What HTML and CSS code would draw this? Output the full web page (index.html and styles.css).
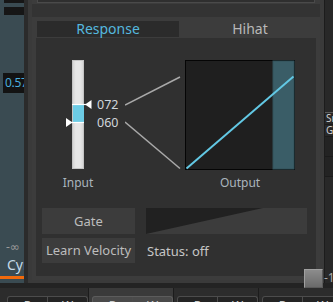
FILE: index.html
```html
<!DOCTYPE html>
<html lang="en">
<head>
    <meta charset="UTF-8">
    <title>Velocity Response</title>
    <link rel="stylesheet" href="styles.css">
</head>
<body>
<div class="app">

    <!-- Track strip on the left, mostly hidden behind the window -->
    <div class="track-strip">
        <div class="strip-cap"></div>
        <div class="strip-cap tall"></div>
        <div class="readout">0.57</div>
        <div class="db">-&infin;</div>
        <div class="track-name">Cymbal</div>
        <div class="track-bar"></div>
    </div>

    <!-- Trigger window -->
    <div class="window">
        <div class="window-body">
            <div class="prev-panel"><div class="prev-box"></div></div>

            <div class="panel">
                <div class="tabs">
                    <div class="tab active">Response</div>
                    <div class="tab">Hihat</div>
                </div>

                <div class="content">
                    <div class="graph-row">
                        <div class="col in-col">
                            <svg class="slider" width="36" height="110" viewBox="0 0 36 110">
                                <defs>
                                    <linearGradient id="slider-fill" x1="0" y1="0" x2="1" y2="0">
                                        <stop offset="0" stop-color="#d2d2d2"/>
                                        <stop offset="0.3" stop-color="#e6e6e6"/>
                                        <stop offset="0.7" stop-color="#e6e6e6"/>
                                        <stop offset="1" stop-color="#d4d4d4"/>
                                    </linearGradient>
                                </defs>
                                <rect x="12.5" y="0.5" width="11" height="108" fill="url(#slider-fill)" stroke="#c4c4c4"/>
                                <rect x="13" y="44" width="11" height="18" fill="#6ccbe4"/>
                                <line x1="12" y1="44.5" x2="26" y2="44.5" stroke="#fff" stroke-width="1.2"/>
                                <polygon points="25,44.5 31.5,40 31.5,49" fill="#fff"/>
                                <line x1="6" y1="62.5" x2="24" y2="62.5" stroke="#fff" stroke-width="1.2"/>
                                <polygon points="6,58 6,67 12.5,62.5" fill="#fff"/>
                            </svg>
                            <div class="axis-label">Input</div>
                        </div>

                        <div class="readouts">
                            <span>072</span>
                            <span>060</span>
                        </div>

                        <svg class="links" width="60" height="110" viewBox="0 0 60 110">
                            <line x1="0" y1="45" x2="55" y2="17" stroke="#a9a9a9" stroke-width="1.5"/>
                            <line x1="0" y1="62" x2="55" y2="108.5" stroke="#a9a9a9" stroke-width="1.5"/>
                        </svg>

                        <div class="col out-col">
                            <svg class="curve" width="110" height="110" viewBox="0 0 110 110">
                                <rect x="0.5" y="0.5" width="109" height="109" fill="#1f1f1f" stroke="#050505"/>
                                <rect x="88" y="1" width="21" height="108" fill="#3a5d67" stroke="#33525b"/>
                                <line x1="1.5" y1="108.5" x2="108.5" y2="16.5" stroke="#62c8e4" stroke-width="2"/>
                            </svg>
                            <div class="axis-label">Output</div>
                        </div>
                    </div>

                    <div class="controls">
                        <div class="buttons">
                            <div class="btn gate">Gate</div>
                            <div class="btn">Learn Velocity</div>
                        </div>
                        <div class="velocity">
                            <svg class="meter" width="161" height="26" viewBox="0 0 161 26">
                                <rect x="0" y="0" width="161" height="26" fill="#212121"/>
                                <polygon points="0,26 117,0 161,0 161,26" fill="#3c3c3c"/>
                            </svg>
                            <div class="status">Status: off</div>
                        </div>
                    </div>
                </div>
            </div>
        </div>
    </div>

    <!-- Mixer list on the right -->
    <div class="side-strip">
        <div class="side-row top"></div>
        <div class="side-row">Snare</div>
        <div class="side-row">Gain</div>
        <div class="side-row empty"></div>
        <div class="side-row empty"></div>
    </div>

    <!-- Record / write buttons along the bottom -->
    <div class="transport">
        <div class="seg first"><div class="rw"><span>R</span><span>W</span></div></div>
        <div class="seg selected"><div class="rw"><span>R</span><span>W</span></div></div>
        <div class="seg"><div class="rw"><span>R</span><span>W</span></div></div>
        <div class="seg"><div class="rw"><span>R</span><span>W</span></div></div>
    </div>

    <div class="thumb"></div>
    <span class="thumb-val">-1</span>
</div>
</body>
</html>
```

FILE: styles.css
```css
/* Reset */
* {
    margin: 0;
    padding: 0;
    box-sizing: border-box;
}

:root {
    --panel: #3c3c3c;
    --body-dark: #333333;
    --content: #303030;
    --accent: #55b8de;
    --text: #c2c2c2;
    --label: #aab5be;
}

body {
    background: #262626;
    font-family: "Noto Sans", "DejaVu Sans", sans-serif;
    color: var(--text);
    overflow: hidden;
}

.app {
    position: relative;
    width: 333px;
    height: 302px;
    display: grid;
    grid-template-columns: 24px 301px 8px;
    grid-template-rows: 283px 19px;
    overflow: hidden;
}

/* Left track strip */
.track-strip {
    background: #3a4b52;
    display: flex;
    flex-direction: column;
    overflow: hidden;
}

.strip-cap {
    margin-left: 4px;
    width: 30px;
    height: 3px;
    background: #161616;
}

.strip-cap.tall {
    margin-top: 4px;
    height: 8px;
}

.readout {
    margin: 58px 0 0 3px;
    width: 40px;
    height: 20px;
    background: #131313;
    color: #4aaede;
    font-size: 12px;
    line-height: 20px;
    padding-left: 2px;
    letter-spacing: -0.3px;
    white-space: nowrap;
}

.db {
    margin: 148px 0 0 6px;
    font-size: 12px;
    line-height: 11px;
    color: #9a9a9a;
    white-space: nowrap;
}

.track-name {
    margin: 6px 0 0 7px;
    font-size: 14px;
    line-height: 14px;
    color: #c6dbe8;
    white-space: nowrap;
}

.track-bar {
    margin-top: 4px;
    height: 3px;
    background: #f06a0c;
}

/* Main window */
.window {
    background: #3a3a3a;
    border-left: 4px solid #2b2b2b;
    border-right: 1px solid #1c1c1c;
    padding: 0 4px 3px;
}

.window-body {
    height: 100%;
    background: var(--body-dark);
    display: flex;
    flex-direction: column;
}

.prev-panel {
    height: 4px;
    background: var(--panel);
    padding: 0 5px 1px;
}

.prev-box {
    height: 3px;
    background: #2f2f2f;
    border: 1px solid #4a4a4a;
    border-top: none;
}

.panel {
    margin-top: 13px;
    flex: 1;
    background: var(--panel);
    padding: 4px 4px 4px;
    display: flex;
    flex-direction: column;
}

/* Tabs */
.tabs {
    display: flex;
    height: 16px;
    margin: 0 1px;
}

.tab {
    font-size: 14px;
    line-height: 16px;
    text-align: center;
    color: #b8b8b8;
    width: 136px;
    padding-left: 6px;
}

.tab.active {
    width: 142px;
    padding-left: 0;
    background: #2b2b2b;
    color: var(--accent);
}

/* Content */
.content {
    margin-top: 1px;
    flex: 1;
    background: var(--content);
    padding-top: 22px;
}

.graph-row {
    display: flex;
    align-items: flex-start;
}

.col {
    display: flex;
    flex-direction: column;
    align-items: center;
}

.in-col {
    margin-left: 24px;
    width: 36px;
}

.out-col {
    width: 110px;
}

.slider,
.links,
.curve {
    display: block;
}

.axis-label {
    margin-top: 6px;
    font-size: 12px;
    line-height: 14px;
    color: var(--label);
    white-space: nowrap;
}

.readouts {
    width: 29px;
    padding: 38px 0 0 1px;
    display: flex;
    flex-direction: column;
    gap: 4px;
    font-size: 12.5px;
    line-height: 14px;
    color: #d0d6db;
}

/* Gate / learn / meter */
.controls {
    margin-top: 18px;
    padding-left: 6px;
    display: flex;
    align-items: flex-start;
}

.buttons {
    width: 93px;
    display: flex;
    flex-direction: column;
    gap: 4px;
}

.btn {
    height: 25px;
    background: var(--panel);
    font-size: 13px;
    line-height: 25px;
    text-align: center;
    color: #bdbdbd;
    white-space: nowrap;
}

.btn.gate {
    height: 26px;
    line-height: 26px;
}

.velocity {
    margin-left: 11px;
}

.meter {
    display: block;
}

.status {
    margin: 9px 0 0 1px;
    font-size: 13px;
    line-height: 16px;
    color: #c6c6c6;
}

/* Right strip */
.side-strip {
    background: #282828;
    display: flex;
    flex-direction: column;
    overflow: hidden;
}

.side-row {
    height: 12px;
    border-bottom: 1px solid #1b1b1b;
    padding-left: 1px;
    font-size: 10px;
    line-height: 11px;
    color: #cfcfcf;
    white-space: nowrap;
    overflow: hidden;
}

.side-row.top {
    height: 113px;
    border-bottom: 1px solid #5a5a5a;
}

.side-row.empty {
    height: 20px;
    background: #232323;
}

/* Bottom transport strip */
.transport {
    grid-column: 1 / 4;
    background: #232323;
    display: flex;
    padding-top: 5px;
}

.seg {
    width: 88px;
    background: #2c2c2c;
    border-left: 1px solid #1c1c1c;
    padding: 8px 0 0 3px;
}

.seg.first {
    width: 92px;
    border-left: none;
    padding-left: 7px;
}

.seg.selected {
    background: #3a3a3a;
}

.rw {
    display: flex;
    width: 81px;
    height: 11px;
    border: 1px solid #4c4c4c;
    border-bottom: none;
    border-radius: 3px 3px 0 0;
    background: #242424;
}

.seg.selected .rw {
    background: #4a4a4a;
    border-color: #5c5c5c;
}

.rw span {
    flex: 1;
    text-align: center;
    font-size: 12px;
    line-height: 18px;
    color: #cccccc;
}

.rw span + span {
    border-left: 1px solid #4c4c4c;
}

/* Scroll handle overlaying the corner */
.thumb {
    position: absolute;
    left: 304px;
    top: 269px;
    width: 19px;
    height: 19px;
    background: linear-gradient(#8c8c8c, #6a6a6a);
    border: 1px solid #a0a0a0;
    border-right-color: #5a5a5a;
    border-bottom-color: #5a5a5a;
}

.thumb-val {
    position: absolute;
    left: 324px;
    top: 271px;
    font-size: 12px;
    line-height: 14px;
    color: #a8a8a8;
}
```
